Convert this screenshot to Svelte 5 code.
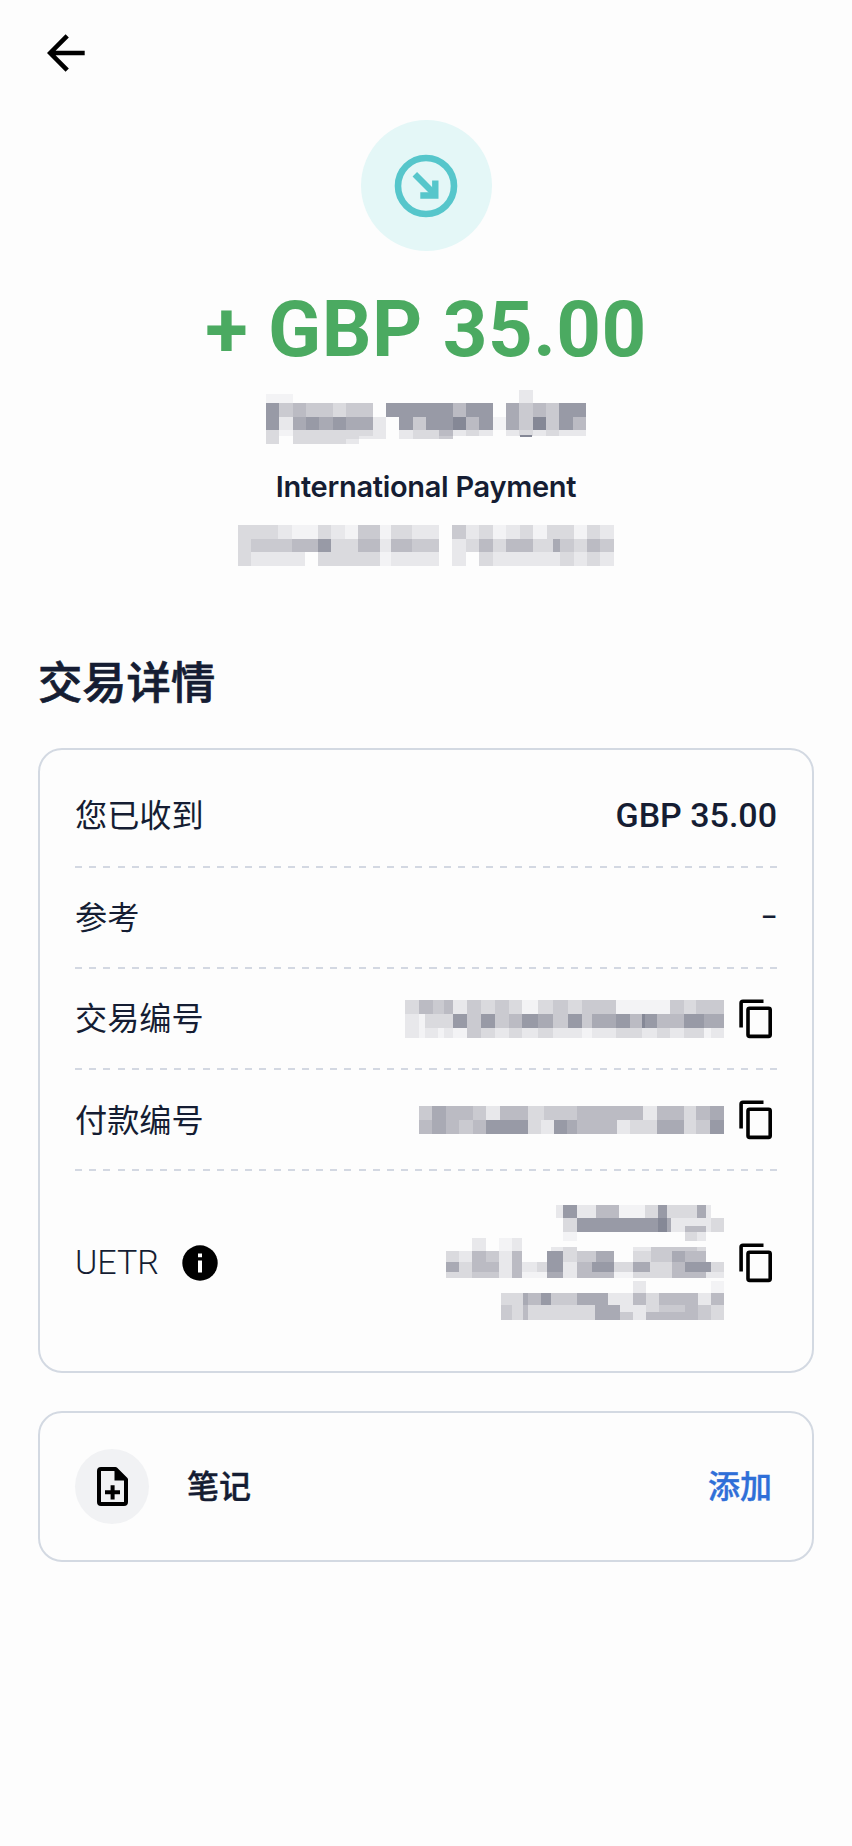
<script lang="ts">
	// Redacted values: each row is [top, height, 'x:shade x:shade ... end']
	type Row = [number, number, string];
	type Mask = { box: [number, number, number, number]; rows: Row[] };

	const SHADES = ['none', '#f3f3f5', '#e8e8eb', '#dadade', '#cacad0', '#bbbbc3', '#a9aab4', '#989aa6', '#858896'];

	const payer: Mask = {
		box: [137, 30, 961, 162],
		rows: [
			[43, 27, '137:1 217:0 897:2 937'],
			[30, 13, '897:2 937'],
			[70, 41, '137:7 177:4 217:5 257:4 337:3 377:4 457:0 497:7 697:5 737:7 817:0 857:6 897:4 937:5 977:4 1017:7 1098'],
			[111, 40, '137:7 177:2 217:6 257:7 297:6 337:7 377:6 457:2 497:0 537:7 577:4 617:7 697:8 737:5 777:7 817:1 857:6 897:4 937:8 977:4 1017:7 1057:5 1098'],
			[151, 16, '137:3 177:1 217:3 457:2 497:0 537:2 577:3 657:5 697:2 737:3 777:2 817:0 857:2 897:3 937:2 977:3 1017:2 1098'],
			[166, 4, '900:8 936'],
			[167, 10, '137:3 177:0 217:3 417:2 497:0 537:2 577:3 657:4 697:0'],
			[177, 14, '137:3 177:0 217:3 377:2 417:0']
		]
	};
	const date: Mask = {
		box: [53, 434, 1129, 122],
		rows: [
			[434, 41, '53:3 174:2 214:1 294:3 333:2 373:1 414:4 478:1 512:3 575:2 655:0 696:4 736:2 776:3 817:1 857:2 899:3 939:1 980:3 1060:1 1100:3 1140:2 1182'],
			[475, 41, '53:3 93:4 214:5 294:7 333:3 414:5 478:2 512:5 575:4 655:0 696:2 736:3 776:5 817:3 857:5 939:3 998:6 1020:4 1060:3 1100:5 1140:4 1182'],
			[516, 40, '53:3 93:2 254:0 294:3 478:1 512:2 655:0 696:2 736:0 776:3 817:2 1020:3 1060:2 1100:3 1140:2 1182']
		]
	};
	const transactionId: Mask = {
		box: [72, 120, 957, 113],
		rows: [
			[120, 42, '72:3 114:5 155:4 190:5 217:2 258:4 301:3 341:4 384:3 424:1 471:3 515:4 562:3 603:4 705:1 868:4 908:3 945:4 1029'],
			[162, 41, '72:2 114:1 132:3 190:3 217:7 258:4 301:7 341:4 384:5 424:7 471:6 515:4 562:7 603:4 633:6 705:7 746:5 784:8 792:7 827:5 908:7 970:6 1029'],
			[203, 30, '72:2 114:1 132:2 172:1 190:2 217:1 258:4 301:3 341:2 384:3 424:2 471:3 515:2 603:1 633:2 705:3 784:2 827:3 868:2 908:3 970:1 990:2 1029']
		]
	};
	const paymentId: Mask = {
		box: [114, 432, 915, 84],
		rows: [
			[432, 42, '114:4 154:6 195:5 275:4 315:2 357:5 440:3 490:4 588:5 745:5 787:2 827:5 908:3 945:5 988:6 1029'],
			[474, 42, '114:5 154:6 195:5 235:4 275:5 315:7 440:3 480:2 519:7 559:6 588:5 709:2 747:3 827:6 908:3 945:4 988:7 1029']
		]
	};
	const uetr: Mask = {
		box: [132, 75, 834, 344],
		rows: [
			[75, 40, '461:2 483:7 524:2 582:5 650:1 730:3 768:7 794:3 886:6 911:2 926'],
			[115, 41, '483:3 524:7 768:8 794:6 807:2 926:3 966'],
			[137, 19, '849:5 911'],
			[156, 26, '483:1 524:0 849:3 886:2 911'],
			[175, 38, '211:2 251:0 291:1 330:2 361'],
			[200, 13, '447:2 483:3 524:0 694:2 747:4 886:3 911'],
			[213, 34, '132:3 171:2 211:5 251:4 291:2 330:5 361:0 436:7 483:3 524:4 582:6 636:0 694:3 747:4 809:6 849:5 911'],
			[247, 28, '132:6 171:3 211:5 291:2 330:5 361:2 405:3 436:7 483:2 524:5 570:7 636:3 694:6 745:3 809:5 849:7 926:3 966'],
			[275, 20, '132:3 211:4 291:2 330:5 361:1 436:6 483:2 524:5 636:1 694:3 809:5 911:2 966'],
			[304, 35, '694:2 733:0 926:1 966'],
			[339, 37, '297:3 363:6 379:5 416:7 447:4 524:6 618:2 694:5 733:3 772:5 887:2 926:5 966'],
			[376, 20, '297:4 330:3 363:5 379:3 580:6 655:2 733:3 772:4 849:5 887:4 926:3 966'],
			[396, 23, '297:4 330:3 363:5 379:3 580:6 655:4 694:2 733:5 887:4 926:3 966']
		]
	};

	const toCells = (rows: Row[]) =>
		rows.flatMap(([y, h, runs]) => {
			const stops = runs.split(' ').map((stop) => stop.split(':').map(Number));
			return stops
				.slice(0, -1)
				.map(([x, shade], i) => ({ x, y, h, w: stops[i + 1][0] - x, shade }))
				.filter((cell) => cell.shade);
		});

	const details = [
		{ label: '您已收到', value: 'GBP 35.00' },
		{ label: '参考', value: '–', empty: true },
		{ label: '交易编号', mask: transactionId },
		{ label: '付款编号', mask: paymentId },
		{ label: 'UETR', mask: uetr, info: true }
	];
</script>

{#snippet redacted(mask: Mask)}
	<svg
		class="redacted"
		width={mask.box[2] / 3}
		height={mask.box[3] / 3}
		viewBox={mask.box.join(' ')}
		shape-rendering="crispEdges"
		aria-hidden="true"
	>
		{#each toCells(mask.rows) as cell}
			<rect x={cell.x} y={cell.y} width={cell.w} height={cell.h} fill={SHADES[cell.shade]} />
		{/each}
	</svg>
{/snippet}

<main>
	<header>
		<button aria-label="返回">
			<svg width="38" height="38" viewBox="0 0 38 38" fill="none" stroke="#000" stroke-width="4.6">
				<path d="M20.2 1.8 3.2 19l17 17.2M3.5 19H37.7" />
			</svg>
		</button>
	</header>

	<section class="summary">
		<div class="badge">
			<svg width="64" height="64" viewBox="0 0 64 64" fill="none" stroke="#56c6cb">
				<circle cx="32" cy="32" r="28" stroke-width="6.6" />
				<path d="M20.8 20.3 40 39.5" stroke-width="6.4" />
				<path d="M41.3 26.5V41.5H26.3" stroke-width="6.4" />
			</svg>
		</div>
		<h1>+ GBP 35.00</h1>
		<div class="payer">{@render redacted(payer)}</div>
		<p class="kind">International Payment</p>
		{@render redacted(date)}
	</section>

	<h2>交易详情</h2>

	<section class="card details">
		{#each details as item}
			<div class="row">
				<span class="label" class:latin={item.info}>{item.label}</span>
				{#if item.info}
					<svg class="info" width="36" height="36" viewBox="0 0 36 36">
						<circle cx="18" cy="18" r="17.7" />
						<path d="M16 8.5h4v3.8h-4zM16 15.5h4v12h-4z" fill="#fff" />
					</svg>
				{/if}
				<div class="value" class:empty={item.empty}>
					{#if item.mask}
						{@render redacted(item.mask)}
						<button class="copy" aria-label="复制">
							<svg width="33" height="40" viewBox="0 0 33 40" fill="none" stroke="#000" stroke-width="3.6">
								<path d="M24.5 2.2H4Q2.1 2.2 2.1 4.1V28.5" />
								<rect x="9" y="9.2" width="22.2" height="28.2" rx="1.6" />
							</svg>
						</button>
					{:else}
						{item.value}
					{/if}
				</div>
			</div>
		{/each}
	</section>

	<section class="card note">
		<div class="note-icon">
			<svg width="31" height="39" viewBox="0 0 31 39">
				<path d="M4 2H18.5L29 12.5V35Q29 37 27 37H4Q2 37 2 35V4Q2 2 4 2Z" fill="none" stroke="#000" stroke-width="4" stroke-linejoin="round" />
				<path d="M17.5 1.5V13.5H29.5Z" />
				<path d="M15.6 18.2V32.5M8 25.3H23" stroke="#000" stroke-width="4" />
			</svg>
		</div>
		<span class="note-title">笔记</span>
		<button class="add">添加</button>
	</section>
</main>

<style>
	:global(body) {
		background: #fdfdfd;
	}
	main {
		box-sizing: border-box;
		min-height: 1846px;
		padding: 0 38px;
		color: #151d33;
		font-family: Roboto, "Noto Sans CJK SC", sans-serif;
	}
	button {
		display: flex;
		padding: 0;
		border: none;
		background: none;
		font-family: inherit;
	}
	svg {
		display: block;
		flex: none;
	}
	header {
		height: 120px;
		padding: 34px 0 0 9px;
		box-sizing: border-box;
	}
	.summary {
		display: flex;
		flex-direction: column;
		align-items: center;
	}
	.badge {
		display: flex;
		align-items: center;
		justify-content: center;
		width: 131px;
		height: 131px;
		border-radius: 50%;
		background: #e4f7f7;
	}
	h1 {
		margin: 32px 0 0;
		height: 94px;
		line-height: 94px;
		font-size: 78px;
		font-weight: 700;
		letter-spacing: 0.5px;
		color: #4baa61;
		white-space: nowrap;
	}
	.payer {
		margin-top: 13px;
	}
	.kind {
		margin: 23px 0 18px;
		height: 40px;
		line-height: 40px;
		font-family: Inter, sans-serif;
		font-size: 29px;
		font-weight: 600;
		letter-spacing: -0.3px;
	}
	h2 {
		margin: 88px 0 0;
		height: 60px;
		line-height: 60px;
		font-size: 44.3px;
		font-weight: 500;
		-webkit-text-stroke: 0.7px currentColor;
	}
	.card {
		box-sizing: border-box;
		border: 2px solid #d3d9e2;
		border-radius: 24px;
		padding: 0 35px;
	}
	.details {
		height: 625px;
		margin-top: 34px;
	}
	.row {
		display: flex;
		align-items: center;
		box-sizing: border-box;
		height: 101.2px;
		padding-bottom: 1px;
		background: repeating-linear-gradient(to right, #d3d8e2 0 7px, transparent 7px 14.18px) left bottom / 100% 2px no-repeat;
	}
	.row:first-child {
		height: 118px;
		padding-top: 14px;
	}
	.row:last-child {
		height: 184px;
		background: none;
	}
	.label {
		margin-top: -5px;
		font-size: 32.2px;
	}
	.label.latin {
		margin-top: -1px;
		font-size: 34px;
		font-weight: 350;
	}
	.info {
		margin-left: 23px;
	}
	.value {
		display: flex;
		align-items: center;
		margin-left: auto;
		font-size: 34px;
		font-weight: 500;
	}
	.value.empty {
		font-size: 25px;
	}
	.copy {
		margin: 0 5px 0 15px;
	}
	.note {
		display: flex;
		align-items: center;
		height: 151px;
		margin-top: 38px;
	}
	.note-icon {
		display: flex;
		align-items: center;
		justify-content: center;
		width: 74px;
		height: 75px;
		border-radius: 50%;
		background: #f1f2f4;
	}
	.note-title {
		margin: -5px 0 0 38px;
		font-size: 32px;
		font-weight: 500;
		-webkit-text-stroke: 0.4px currentColor;
	}
	.add {
		margin: -5px 5px 0 auto;
		font-size: 32px;
		font-weight: 500;
		color: #2f6fd8;
		-webkit-text-stroke: 0.4px currentColor;
	}
</style>
